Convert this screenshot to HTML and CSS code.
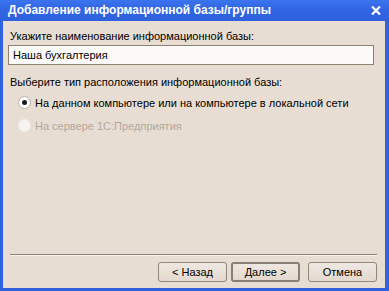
FILE: index.html
```html
<!DOCTYPE html>
<html>
<head>
  <meta charset="UTF-8">
  <title>Добавление информационной базы/группы</title>
  <link rel="stylesheet" href="styles.css">
</head>
<body>
  <div class="window">
    <div class="title-bar">
      <span class="title">Добавление информационной базы/группы</span>
      <span class="close">
        <svg width="10" height="9" viewBox="0 0 10 9">
          <path d="M1 0.5 L9 8.5 M9 0.5 L1 8.5" stroke="#fff" stroke-width="2.2"/>
        </svg>
      </span>
    </div>
    <div class="client">
      <div class="label">Укажите наименование информационной базы:</div>
      <div class="text-input">Наша бухгалтерия</div>

      <div class="label group-label">Выберите тип расположения информационной базы:</div>
      <div class="radio-row">
        <span class="radio checked"></span>
        <span>На данном компьютере или на компьютере в локальной сети</span>
      </div>
      <div class="radio-row disabled">
        <span class="radio"></span>
        <span>На сервере 1С:Предприятия</span>
      </div>

      <div class="spacer"></div>
      <div class="separator"></div>
      <div class="buttons">
        <button class="btn">&lt; Назад</button>
        <button class="btn default">Далее &gt;</button>
        <button class="btn cancel">Отмена</button>
      </div>
    </div>
  </div>
</body>
</html>
```

FILE: styles.css
```css
html, body {
  margin: 0;
  padding: 0;
}

body {
  width: 389px;
  height: 291px;
  overflow: hidden;
  font-family: "Liberation Sans", Arial, sans-serif;
  font-size: 11px;
  color: #000;
}

.window {
  width: 389px;
  height: 291px;
  display: flex;
  flex-direction: column;
  background: #3062df;
}

.title-bar {
  height: 20px;
  display: flex;
  align-items: center;
  justify-content: space-between;
  padding: 0 8px 1px 8px;
  background: linear-gradient(to bottom, #3b74ee 0%, #3266e4 40%, #2f60dd 100%);
  color: #fff;
}

.title {
  font-family: "Liberation Sans", sans-serif;
  font-weight: bold;
  font-size: 12px;
}

.close {
  display: flex;
  margin-top: 1px;
}

.client {
  flex: 1;
  display: flex;
  flex-direction: column;
  margin: 0 4px 3px 3px;
  padding: 9px 8px 6px 5px;
  background: #e8ddd3;
}

.label {
  padding-left: 2px;
  line-height: 13px;
}

.text-input {
  margin-top: 2px;
  height: 18px;
  line-height: 18px;
  padding-left: 4px;
  background: #fdfafa;
  border: 1px solid #8d806f;
  margin-right: 3px;
}

.group-label {
  margin-top: 11px;
}

.radio-row {
  display: flex;
  align-items: center;
  height: 17px;
  margin-top: 5px;
  padding-left: 10px;
}

.radio-row + .radio-row {
  margin-top: 6px;
}

.radio {
  width: 11px;
  height: 11px;
  margin-right: 4px;
  border-radius: 50%;
  border: 1px solid #b9afa5;
  background: #fff;
  position: relative;
}

.radio.checked::after {
  content: "";
  position: absolute;
  left: 3px;
  top: 3px;
  width: 5px;
  height: 5px;
  border-radius: 50%;
  background: #1a1a1a;
}

.disabled {
  color: #b3a89d;
}

.disabled .radio {
  border-color: #f1ece7;
  background: #f7f3f0;
}

.spacer {
  flex: 1;
}

.separator {
  margin-left: 2px;
  border-top: 1px solid #8f8377;
  border-bottom: 1px solid #f6f2ee;
}

.buttons {
  display: flex;
  justify-content: flex-end;
  margin-top: 6px;
}

.btn {
  width: 69px;
  height: 20px;
  padding: 0;
  margin-left: 4px;
  font-family: "Liberation Sans", Arial, sans-serif;
  font-size: 11px;
  color: #000;
  background: linear-gradient(to bottom, #efe8e2, #e3d8ce);
  border: 1px solid #8f867c;
  border-radius: 3px;
}

.btn.default {
  border: 2px solid #8a7f74;
}

.btn.cancel {
  margin-left: 8px;
}
```
